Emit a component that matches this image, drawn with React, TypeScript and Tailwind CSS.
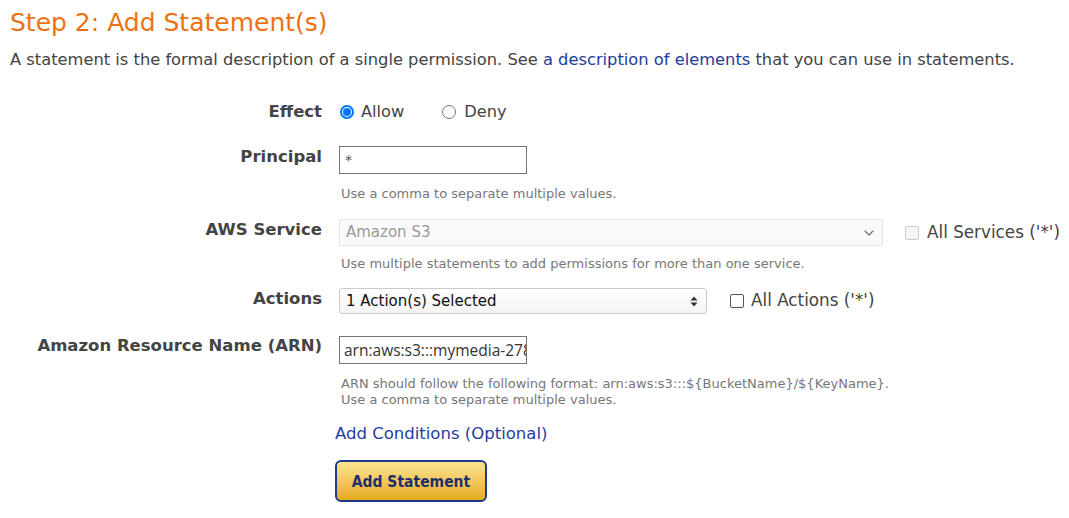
import React from 'react';
import { ChevronDown } from 'lucide-react';

const Radio = ({ checked }: { checked?: boolean }) =>
  checked ? (
    <span className="flex h-[14px] w-[14px] items-center justify-center rounded-full border-2 border-[#0075ff]">
      <span className="h-[8px] w-[8px] rounded-full bg-[#0075ff]" />
    </span>
  ) : (
    <span className="block h-[14px] w-[14px] rounded-full border border-[#767676]" />
  );

const Label = ({ children }: { children: React.ReactNode }) => (
  <div className="text-right text-[16.5px] font-bold leading-[20px] text-[#444]">{children}</div>
);

const Help = ({ children }: { children: React.ReactNode }) => (
  <div className="pl-[2px] text-[13px] leading-[16px] text-[#777]">{children}</div>
);

export default function App() {
  return (
    <div className="min-h-screen bg-white font-['DejaVu_Sans',sans-serif] text-[#444]">
      <div className="px-[10px]">
        <h1 className="pt-[7px] text-[25px] leading-[32px] text-[#ec7211]">Step 2: Add Statement(s)</h1>
        <p className="mt-[11px] text-[16.3px] leading-[20px]">
          A statement is the formal description of a single permission. See{' '}
          <a className="text-[#1d3d9e]">a description of elements</a> that you can use in statements.
        </p>
      </div>

      <div className="mt-[29px] grid grid-cols-[322px_1fr] gap-x-[17px]">
        {/* Effect */}
        <div className="flex h-[24px] items-center justify-end pt-[2px]">
          <Label>Effect</Label>
        </div>
        <div className="flex h-[24px] items-center pt-[2px] text-[16.2px]">
          <span className="ml-px"><Radio checked /></span>
          <span className="ml-[7px]">Allow</span>
          <span className="ml-[38px]"><Radio /></span>
          <span className="ml-[8px]">Deny</span>
        </div>

        {/* Principal */}
        <div className="mt-[23px] pt-px">
          <Label>Principal</Label>
        </div>
        <div className="mt-[23px]">
          <div className="flex h-[28px] w-[188px] items-center border border-[#767676] px-[5px] text-[14px] text-[#555]">*</div>
          <div className="mt-[12px]">
            <Help>Use a comma to separate multiple values.</Help>
          </div>
        </div>

        {/* AWS Service */}
        <div className="mt-[17px] pt-px">
          <Label>AWS Service</Label>
        </div>
        <div className="mt-[17px]">
          <div className="flex items-center">
            <div className="flex h-[27px] w-[544px] items-center justify-between rounded-[2px] border border-[#e3e3e3] bg-[#fafafa] pl-[6px] pr-[5px] text-[15px] text-[#999]">
              <span>Amazon S3</span>
              <ChevronDown size={16} strokeWidth={1.6} className="text-[#666]" />
            </div>
            <div className="ml-[22px] flex items-center">
              <span className="h-[14px] w-[14px] rounded-[2px] border border-[#cfcfcf] bg-[#f6f6f6]" />
              <span className="ml-[8px] text-[16.8px] text-[#444]">All Services ('*')</span>
            </div>
          </div>
          <div className="mt-[10px]">
            <Help>Use multiple statements to add permissions for more than one service.</Help>
          </div>
        </div>

        {/* Actions */}
        <div className="mt-[16px] pt-px">
          <Label>Actions</Label>
        </div>
        <div className="mt-[16px] flex items-center">
          <div className="flex h-[26px] w-[368px] items-center justify-between rounded-[3px] border border-[#cbcbcb] bg-gradient-to-b from-white to-[#f3f3f3] pl-[6px] pr-[8px] text-[15px] text-[#111]">
            <span>1 Action(s) Selected</span>
            <svg width="8" height="11" viewBox="0 0 8 11" className="text-[#333]">
              <path d="M4 0.5 L7.5 4.5 H0.5 Z" fill="currentColor" />
              <path d="M4 10.5 L7.5 6.5 H0.5 Z" fill="currentColor" />
            </svg>
          </div>
          <div className="ml-[23px] flex items-center">
            <span className="h-[14px] w-[14px] rounded-[2px] border border-[#555]" />
            <span className="ml-[7px] text-[16.8px] text-[#444]">All Actions ('*')</span>
          </div>
        </div>

        {/* ARN */}
        <div className="mt-[22px]">
          <Label>Amazon Resource Name (ARN)</Label>
        </div>
        <div className="mt-[22px]">
          <input
            readOnly
            value="arn:aws:s3:::mymedia-278"
            className="block h-[28px] w-[188px] border border-[#767676] pl-[4px] font-['Open_Sans',sans-serif] text-[15.5px] text-[#333] outline-none"
          />
          <div className="mt-[12px]">
            <Help>
              ARN should follow the following format: arn:aws:s3:::${'{'}BucketName{'}'}/${'{'}KeyName{'}'}.
              <br />
              Use a comma to separate multiple values.
            </Help>
          </div>
          <a className="-ml-[4px] mt-[16px] block text-[16.5px] leading-[20px] text-[#1d3d9e]">Add Conditions (Optional)</a>
          <button className="-ml-[4px] mt-[16px] flex h-[42px] w-[152px] items-center justify-center rounded-[6px] border-2 border-[#1e3a8a] bg-gradient-to-b from-[#fde58f] to-[#e6aa0e] pt-[3px] font-['DejaVu_Sans_Condensed','DejaVu_Sans',sans-serif] text-[15.5px] font-bold text-[#1f2f6e]">
            Add Statement
          </button>
        </div>
      </div>
    </div>
  );
}
